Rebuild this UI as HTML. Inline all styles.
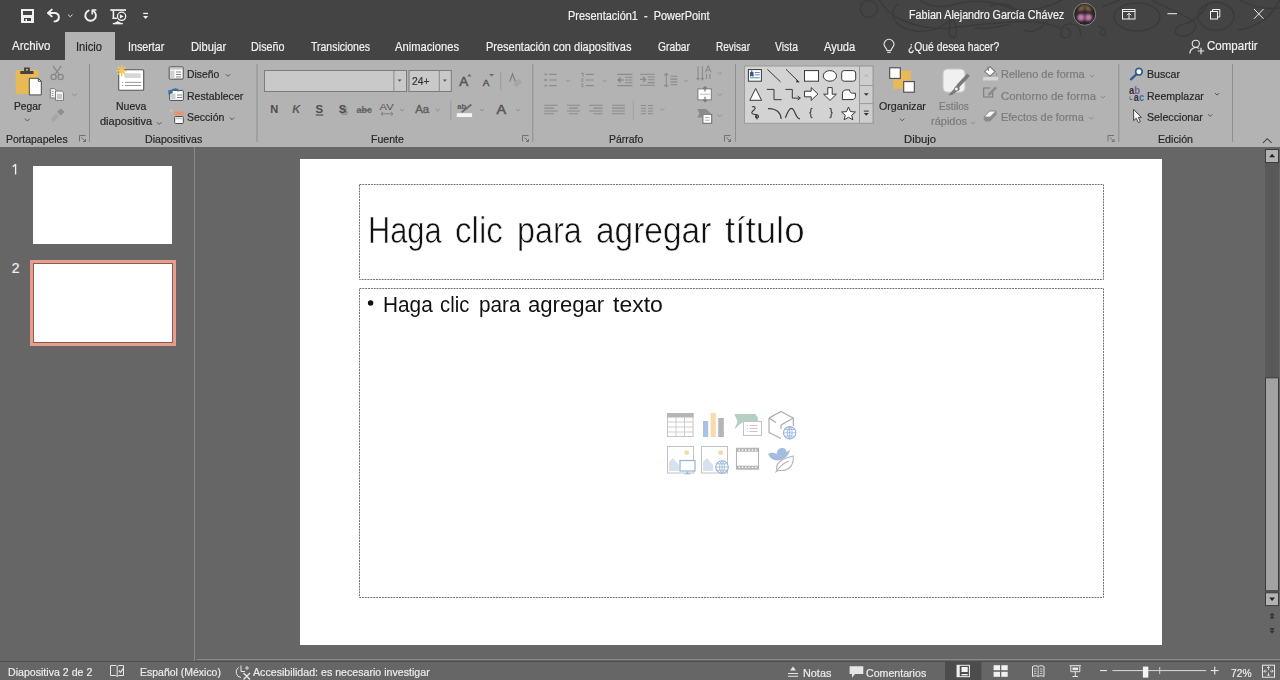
<!DOCTYPE html>
<html><head><meta charset="utf-8"><style>
*{margin:0;padding:0;box-sizing:border-box}
html,body{width:1280px;height:680px;overflow:hidden;background:#666;font-family:"Liberation Sans",sans-serif}
.a{position:absolute}
.t{position:absolute;white-space:nowrap;transform-origin:0 0;-webkit-text-stroke:0.2px currentColor}
svg{position:absolute;overflow:visible}
</style></head><body>
<div class="a" style="left:0;top:0;width:1280px;height:60px;background:#444"></div>
<div class="a" style="left:65px;top:32px;width:50px;height:28px;background:#b3b3b3"></div>
<div class="a" style="left:0;top:60px;width:1280px;height:87px;background:#b3b3b3"></div>
<!-- thumbnails -->
<div class="a" style="left:33px;top:166px;width:139px;height:78px;background:#fff"></div>
<div class="a" style="left:30px;top:260px;width:146px;height:86px;background:#e79e8e"></div>
<div class="a" style="left:33px;top:263px;width:140px;height:80px;background:#8a5a50"></div>
<div class="a" style="left:34px;top:264px;width:138px;height:78px;background:#fff"></div>
<div class="a" style="left:194px;top:147px;width:1px;height:514px;background:#8a8a8a"></div>
<!-- slide -->
<div class="a" style="left:300px;top:159px;width:862px;height:486px;background:#fff"></div>
<!-- status -->
<div class="a" style="left:197px;top:659px;width:1083px;height:1px;background:#888"></div>
<div class="a" style="left:0;top:661px;width:1280px;height:1px;background:#4d4d4d"></div>
<svg width="1280" height="680" style="left:0;top:0">
<!-- title bar decoration -->
<g stroke="#3a3a3a" stroke-width="1.4" fill="none" opacity="0.9">
<circle cx="868.8" cy="8.8" r="8.5"/>
<path d="M879 0 C884 8 892 16 902 20 C915 26 935 30 950 28 C970 25 990 24 1010 22 C1030 20 1045 22 1060 28"/>
<path d="M898 4 C888 10 892 28 915 31 C935 33 945 25 953 18"/>
<path d="M953 18 C948 26 948 37 953 38 C958 37 957 26 953 18"/>
<path d="M920 0 C930 8 945 8 960 3 C975 -1 995 2 1010 8 C1030 14 1050 6 1062 0"/>
<path d="M975 28 C990 30 1000 26 1010 24"/>
<ellipse cx="1137" cy="17" rx="23" ry="14"/>
<path d="M1152 0 C1165 8 1185 14 1194 22 C1200 28 1190 38 1180 36 C1172 34 1175 26 1184 24 C1195 22 1205 10 1208 3"/>
<ellipse cx="1216" cy="16.3" rx="18" ry="14"/>
<path d="M1238 30 C1255 28 1268 18 1272 12 C1276 6 1278 2 1280 0"/>
<path d="M1102 7 C1108 4 1114 2 1120 0"/>
<path d="M1098 26 C1104 28 1108 32 1104 35 C1100 36 1099 32 1102 30"/>
<path d="M1240 0 C1250 6 1262 10 1280 8"/>
<path d="M1065.5 28 A5 5 0 1 1 1060.5 33 A9 9 0 0 1 1069.5 24 C1078 24 1082 30 1080 36"/>
<path d="M1024 30 C1030 34 1040 30 1046 22 C1050 16 1056 12 1062 14"/>
<path d="M990 6 C1000 2 1010 4 1016 10"/>
</g>
<!-- ===== QAT ===== -->
<g fill="#f0f0f0">
<rect x="21" y="9" width="13" height="14"/>
</g>
<rect x="23" y="11" width="9" height="4" fill="#444"/>
<rect x="24" y="18" width="7" height="3" fill="#444"/>
<rect x="25.5" y="19" width="1.5" height="2" fill="#f0f0f0"/>
<g fill="none" stroke="#f0f0f0" stroke-width="1.9" stroke-linecap="round" stroke-linejoin="round">
<path d="M48.5 13 H55.5 A4.3 4.3 0 0 1 55.5 21.4 H54.5"/>
<path d="M51.8 9.6 L48 13 L51.8 16.4"/>
<path d="M88.6 10.6 A5.3 5.3 0 1 0 93.4 11"/>
<path d="M92.2 14.6 V10 H96.4" stroke-width="1.5" stroke-linecap="butt"/>
</g>
<path d="M68 14.6 L70.25 16.8 L72.5 14.6" fill="none" stroke="#e0e0e0" stroke-width="1"/>
<g fill="#f0f0f0">
<rect x="110.3" y="9.2" width="15.7" height="1.7"/>
<rect x="112.6" y="10.5" width="1.6" height="8.5"/>
<rect x="112.6" y="17.6" width="4.6" height="1.4"/>
<path d="M112.8 23.9 L117.7 21 L122.8 23.9 V24.2 H112.8Z"/>
<rect x="112.8" y="22.9" width="10" height="1.2"/>
<path d="M119.9 14.2 V18.6 L123.6 16.4Z"/>
<rect x="143.2" y="12.8" width="4.8" height="1.3"/>
<path d="M143 16.1 H148.2 L145.6 19.1Z"/>
</g>
<circle cx="121.6" cy="16.3" r="4.1" fill="none" stroke="#f0f0f0" stroke-width="1.3"/>
<!-- ===== window controls ===== -->
<g fill="none" stroke="#f0f0f0" stroke-width="1">
<rect x="1122.5" y="9.5" width="12.5" height="9.5"/>
<path d="M1122.5 11.5 H1135"/>
<path d="M1129 19 V13.2 M1127 15.2 L1129 13.2 L1131 15.2"/>
<rect x="1210.5" y="11.5" width="7" height="7.5"/>
<path d="M1212.5 11.5 V9.5 H1219.8 V17 H1217.5"/>
<path d="M1254 9 L1263.5 18.8 M1263.5 9 L1254 18.8"/>
</g>
<rect x="1167.4" y="13.2" width="9.6" height="1" fill="#f0f0f0"/>
<!-- avatar -->
<defs><filter id="blr" x="-50%" y="-50%" width="200%" height="200%"><feGaussianBlur stdDeviation="0.9"/></filter><clipPath id="avc"><circle cx="1084.7" cy="14.3" r="10.5"/></clipPath></defs>
<circle cx="1084.7" cy="14.3" r="11" fill="#2a2222" stroke="#8a8a8a" stroke-width="1"/>
<g clip-path="url(#avc)"><g filter="url(#blr)">
<path d="M1078 12 C1078 7 1081 5 1084.7 5 C1088.4 5 1091.4 7 1091.4 12 C1089 10 1080 10 1078 12Z" fill="#7a6448"/>
<ellipse cx="1081" cy="17.4" rx="3.6" ry="3.4" fill="#c47aae"/>
<ellipse cx="1088.4" cy="17.4" rx="3.6" ry="3.4" fill="#c47aae"/>
<path d="M1084.7 6 V24" stroke="#1e1612" stroke-width="1.6" fill="none"/>
</g></g>
<!-- tab row icons -->
<g fill="none" stroke="#e8e8e8" stroke-width="1.1">
<path d="M887 50.5 C887 48 884 47 884 44.3 A5 5 0 0 1 894 44.3 C894 47 891 48 891 50.5 Z"/>
<path d="M887.2 52.3 H890.8"/>
<circle cx="1195.8" cy="43.8" r="3.6"/>
<path d="M1189.8 53.5 A6.2 6.2 0 0 1 1199.2 48.4" />
<path d="M1201 47.8 V54.3 M1197.8 51 H1204.2" stroke-width="1.2"/>
</g>
<!-- ===== Portapapeles ===== -->
<rect x="15.8" y="70" width="22.4" height="24" fill="#e9b955"/>
<path d="M20.3 74 V71 H24 V67.6 H29.8 V71 H33.5 V74Z" fill="#444"/>
<circle cx="26.9" cy="69.8" r="0.9" fill="#d8d8d8"/>
<path d="M29.3 78.3 H38.3 L41.3 81.3 V94.9 H29.3Z" fill="#fff" stroke="#4a4a4a" stroke-width="1"/>
<path d="M38.3 78.3 V81.3 H41.3" fill="none" stroke="#4a4a4a" stroke-width="1"/>
<path d="M25 118.6 L27.4 121 L29.8 118.6" fill="none" stroke="#555" stroke-width="1"/>
<!-- scissors -->
<g fill="none" stroke="#858585" stroke-width="1.2">
<path d="M53 65.8 L59.6 75 M61.2 65.8 L54.6 75"/>
<circle cx="53.6" cy="77" r="2.6"/>
<circle cx="60.6" cy="77" r="2.6"/>
</g>
<!-- copy -->
<path d="M50.3 88.6 H54.5 L56 90 V98 H50.3Z" fill="#f4f4f4" stroke="#7a7a7a" stroke-width="1"/>
<path d="M55.5 91 H61.8 L63.5 92.7 V100.4 H55.5Z" fill="#f4f4f4" stroke="#7a7a7a" stroke-width="1"/>
<path d="M51.8 91.5 H53.5 M51.8 93.5 H53.5 M51.8 95.5 H53.5" stroke="#888" stroke-width="0.8"/>
<rect x="57" y="94" width="5" height="5" fill="#c8c8c8"/>
<path d="M72.2 93.8 L74.5 96 L76.8 93.8" fill="none" stroke="#8a8a8a" stroke-width="1"/>
<!-- format painter -->
<path d="M50.5 119 L56 113.5 L59 116.5 L53.5 122Z" fill="#a6a6a6"/>
<path d="M57 111.5 L61 108.5 L64.6 112 L60.5 115.5Z" fill="#8e8e8e"/>
<!-- separators -->
<rect x="89" y="64" width="1" height="78" fill="#8e8e8e"/>
<rect x="256.5" y="64" width="1" height="78" fill="#8e8e8e"/>
<rect x="532.3" y="64" width="1" height="78" fill="#8e8e8e"/>
<rect x="735" y="64" width="1" height="78" fill="#8e8e8e"/>
<rect x="1118.3" y="64" width="1" height="78" fill="#8e8e8e"/>
<rect x="1232" y="64" width="1" height="78" fill="#8e8e8e"/>
<!-- dialog launchers -->
<g fill="none" stroke="#6a6a6a" stroke-width="0.9">
<path d="M79.5 141.5 V135.5 H85.5 M81.5 137.5 L85.5 141.5 M85.5 139 V141.5 H83"/>
<path d="M522.5 141.5 V135.5 H528.5 M524.5 137.5 L528.5 141.5 M528.5 139 V141.5 H526"/>
<path d="M724.5 141.5 V135.5 H730.5 M726.5 137.5 L730.5 141.5 M730.5 139 V141.5 H728"/>
<path d="M1108 141.5 V135.5 H1114 M1110 137.5 L1114 141.5 M1114 139 V141.5 H1111.5"/>
</g>
<!-- ===== Diapositivas ===== -->
<rect x="118.7" y="69.8" width="25" height="20.5" rx="1" fill="#fff" stroke="#555" stroke-width="1.1"/>
<rect x="124.6" y="73.3" width="16" height="4.7" fill="#d6d6d6"/>
<path d="M122 82.4 H123.2 M125 82.4 H141 M122 85.5 H123.2 M125 85.5 H141" stroke="#8a8a8a" stroke-width="0.9"/>
<g stroke="#f0c860" stroke-width="1.6" stroke-linecap="round">
<path d="M121.6 66 V75.4 M116.9 70.7 H126.3 M118.3 67.4 L124.9 74 M124.9 67.4 L118.3 74"/>
</g>
<circle cx="121.6" cy="70.7" r="1.8" fill="#f0c860"/>
<path d="M157 122.3 L159.2 124.5 L161.4 122.3" fill="none" stroke="#555" stroke-width="1"/>
<!-- Diseño icon -->
<rect x="169.2" y="66.9" width="14" height="12.2" rx="0.8" fill="#fff" stroke="#4a4a4a" stroke-width="1"/>
<rect x="170.2" y="67.9" width="12" height="1.7" fill="#c8c8c8"/>
<rect x="170.2" y="70.5" width="4.2" height="8" fill="#cfcfcf"/>
<path d="M176 72 H181 M176 74.5 H181 M176 77 H181" stroke="#777" stroke-width="0.9"/>
<path d="M225.8 74.2 L228 76.4 L230.2 74.2" fill="none" stroke="#555" stroke-width="1"/>
<!-- Restablecer -->
<rect x="169.7" y="90.4" width="13.6" height="10" rx="0.8" fill="#fff" stroke="#4a4a4a" stroke-width="1"/>
<rect x="171" y="93.5" width="4.5" height="5.5" fill="#cfcfcf"/>
<path d="M177 95 H182 M177 97.5 H182" stroke="#777" stroke-width="0.9"/>
<path d="M171 92.6 C172 89 176.5 88 178.6 91.2" fill="none" stroke="#3b6fa6" stroke-width="1.8"/>
<path d="M168.2 89.8 L173.4 92.4 L168.6 95Z" fill="#3b6fa6"/>
<!-- Sección -->
<circle cx="171.2" cy="110.6" r="1.3" fill="#f3c08a" opacity="0.8"/>
<rect x="174.2" y="111.6" width="9.4" height="3.4" rx="0.6" fill="#e8946a"/>
<rect x="174.7" y="116.5" width="8.6" height="7" rx="0.8" fill="#fff" stroke="#4a4a4a" stroke-width="1"/>
<rect x="175.7" y="117.5" width="6.6" height="1.8" fill="#c8c8c8"/>
<path d="M229.8 117.5 L232 119.7 L234.2 117.5" fill="none" stroke="#555" stroke-width="1"/>
<!-- ===== Fuente ===== -->
<rect x="264.5" y="70.5" width="142" height="21" fill="#c9c9c9" stroke="#7c7c7c" stroke-width="1"/>
<path d="M393.9 71 V91" stroke="#8a8a8a" stroke-width="1"/>
<path d="M397.6 79.6 H401.6 L399.6 81.8Z" fill="#555"/>
<rect x="409" y="70.5" width="42.3" height="21" fill="#c9c9c9" stroke="#7c7c7c" stroke-width="1"/>
<path d="M439.3 71 V91" stroke="#8a8a8a" stroke-width="1"/>
<path d="M442.8 79.6 H446.8 L444.8 81.8Z" fill="#555"/>
<!-- grow/shrink font -->
<text x="459.2" y="86" font-family="Liberation Sans" font-size="12.4" fill="#555" stroke="#555" stroke-width="0.5" textLength="9" lengthAdjust="spacingAndGlyphs">A</text>
<path d="M467.4 76.6 L469.4 73.8 L471.4 76.6Z" fill="#666"/>
<text x="482.8" y="86" font-family="Liberation Sans" font-size="8.6" fill="#555" stroke="#555" stroke-width="0.4" textLength="6.6" lengthAdjust="spacingAndGlyphs">A</text>
<path d="M489.3 74 H494 L491.6 76.6Z" fill="#666"/>
<rect x="500.2" y="72.2" width="1" height="18" fill="#9a9a9a"/>
<path d="M509.8 81.5 L512.5 73.8 L515.3 81.5" fill="none" stroke="#7a7a7a" stroke-width="1.1"/>
<path d="M513 84 L518.5 78.5 L522 82 L516.5 87.5Z" fill="#a6a6a6"/>
<!-- row 2 -->
<text x="270.2" y="113" font-family="Liberation Sans" font-size="11" font-weight="bold" fill="#4e4e4e" textLength="8" lengthAdjust="spacingAndGlyphs">N</text>
<text x="292.3" y="113" font-family="Liberation Sans" font-size="11" font-weight="bold" font-style="italic" fill="#5a5a5a" textLength="8" lengthAdjust="spacingAndGlyphs">K</text>
<text x="315.6" y="113" font-family="Liberation Sans" font-size="11" font-weight="bold" fill="#4e4e4e" textLength="7.6" lengthAdjust="spacingAndGlyphs">S</text>
<rect x="315.8" y="114.4" width="7.4" height="1.2" fill="#4e4e4e"/>
<text x="340.4" y="114.6" font-family="Liberation Sans" font-size="11" font-weight="bold" fill="#8c8c8c" textLength="7.6" lengthAdjust="spacingAndGlyphs">S</text>
<text x="338.8" y="113" font-family="Liberation Sans" font-size="11" font-weight="bold" fill="#4e4e4e" textLength="7.6" lengthAdjust="spacingAndGlyphs">S</text>
<text x="356.6" y="113" font-family="Liberation Sans" font-size="9.5" font-weight="bold" fill="#606060" textLength="15.4" lengthAdjust="spacingAndGlyphs">abc</text>
<rect x="356.6" y="109.6" width="15.4" height="1" fill="#606060"/>
<text x="379.6" y="110.2" font-family="Liberation Sans" font-size="9.2" fill="#555" textLength="14" lengthAdjust="spacingAndGlyphs">AV</text>
<path d="M381 113.8 H393 M383 111.9 L381 113.8 L383 115.7 M391 111.9 L393 113.8 L391 115.7" fill="none" stroke="#7a7a7a" stroke-width="0.9"/>
<path d="M400 109 L402.1 111 L404.2 109" fill="none" stroke="#888" stroke-width="0.9"/>
<text x="415.2" y="113.2" font-family="Liberation Sans" font-size="11.6" fill="#606060" stroke="#606060" stroke-width="0.4" textLength="14" lengthAdjust="spacingAndGlyphs">Aa</text>
<path d="M435.6 109 L437.7 111 L439.8 109" fill="none" stroke="#888" stroke-width="0.9"/>
<rect x="450.3" y="100.7" width="1" height="19" fill="#9a9a9a"/>
<text x="457.2" y="109.2" font-family="Liberation Sans" font-size="8" font-weight="bold" fill="#555" textLength="9" lengthAdjust="spacingAndGlyphs">ab</text>
<path d="M461.7 112.2 L471.4 104.5" stroke="#6a6a6a" stroke-width="1.8"/>
<rect x="456.8" y="113.2" width="15.3" height="3.8" fill="#f4f4f4"/>
<path d="M479.9 109 L482 111 L484.1 109" fill="none" stroke="#888" stroke-width="0.9"/>
<text x="496.4" y="114" font-family="Liberation Sans" font-size="13.4" fill="#5a5a5a" stroke="#5a5a5a" stroke-width="0.6" textLength="9.6" lengthAdjust="spacingAndGlyphs">A</text>
<path d="M516 109 L518.1 111 L520.2 109" fill="none" stroke="#888" stroke-width="0.9"/>
<!-- ===== Párrafo ===== -->
<g stroke="#8a8a8a" stroke-width="1.1" fill="none">
<path d="M544.6 74.4 H546.8 M544.6 80 H546.8 M544.6 85.6 H546.8" stroke-width="1.8"/>
<path d="M549 74.4 H556.7 M549 80 H556.7 M549 85.6 H556.7"/>
<path d="M566 79.8 L568 81.8 L570 79.8" stroke-width="0.9"/>
<path d="M581.2 73.4 H583 V76.4 M585.7 74.4 H593.8 M585.7 80 H593.8 M585.7 85.6 H593.8" />
<path d="M581.2 79 H583.4 L581.2 81.2 H583.6 M581.2 84 H583.4 L582 85.4 L583.4 86.6 L581.2 87.2" stroke-width="0.8"/>
<path d="M602.4 79.8 L604.4 81.8 L606.4 79.8" stroke-width="0.9"/>
<path d="M617.4 74.4 H632.4 M617.4 85.6 H632.4 M625 77.3 H632.4 M625 80 H632.4 M625 82.8 H632.4"/>
<path d="M618 80 H623.6 M620.6 77.4 L618 80 L620.6 82.6" stroke-width="1.4"/>
<path d="M640 74.2 H654.8 M640 85.3 H654.8 M647.8 77 H654.8 M647.8 79.8 H654.8 M647.8 82.6 H654.8"/>
<path d="M640 79.4 H645.6 M643 76.8 L645.6 79.4 L643 82" stroke-width="1.4"/>
<path d="M666.3 73.4 V86.8 M664.3 75.4 L666.3 73.4 L668.3 75.4 M664.3 84.8 L666.3 86.8 L668.3 84.8"/>
<path d="M670.4 76.3 H677.4 M670.4 79.1 H677.4 M670.4 81.9 H677.4 M670.4 84.7 H677.4"/>
<path d="M683.9 79.8 L685.9 81.8 L687.9 79.8" stroke-width="0.9"/>
<path d="M698 66.2 V79.4 M702.4 66.2 V79.4 M696.6 78 L698 79.8 L699.4 78 M701 78 L702.4 79.8 L703.8 78 M706.5 74 V79 M709.9 74 V79" stroke-width="1.1"/>
<path d="M705.3 72.4 L708.2 65.8 L711.1 72.4 M706.4 70.2 H710" stroke-width="1.1"/>
<path d="M717.8 72.3 L719.8 74.3 L721.8 72.3" stroke-width="0.9"/>
<path d="M544.2 105.3 H557.6 M544.2 108.1 H553.9 M544.2 111 H557.6 M544.2 113.7 H553.9"/>
<path d="M567 105.3 H580 M569 108.1 H578 M567 111 H580 M569 113.7 H578"/>
<path d="M589.2 105.3 H602.6 M593.2 108.1 H602.6 M589.2 111 H602.6 M593.2 113.7 H602.6"/>
<path d="M612 105.3 H625 M612 108.1 H625 M612 111 H625 M612 113.7 H625"/>
<path d="M640.9 105.5 H645.9 M648 105.5 H653.1 M640.9 108.3 H645.9 M648 108.3 H653.1 M640.9 111 H645.9 M648 111 H653.1 M640.9 113.8 H645.9 M648 113.8 H653.1"/>
<path d="M660.4 108.5 L662.4 110.5 L664.4 108.5" stroke-width="0.9"/>
<path d="M717.8 93.5 L719.8 95.5 L721.8 93.5 M717.8 114.6 L719.8 116.6 L721.8 114.6" stroke-width="0.9"/>
</g>
<rect x="632.7" y="100.2" width="1" height="19.4" fill="#a0a0a0"/>
<rect x="697.9" y="88.9" width="13.4" height="11" fill="#fff" stroke="#7a7a7a" stroke-width="1"/>
<path d="M705 86.8 V91.5 M703 88.8 L705 86.8 L707 88.8 M705 96.8 V101.6 M703 99.6 L705 101.6 L707 99.6" stroke="#7a7a7a" stroke-width="1.3" fill="none"/>
<path d="M700 94.2 H710" stroke="#aaa" stroke-width="0.8"/>
<path d="M697.2 109 H706 L710.8 113.6 H702.4 V117.5 H697.2 L699.5 113.3Z" fill="#8a8a8a"/>
<rect x="702.9" y="114.3" width="8.8" height="9" fill="#fff" stroke="#6a6a6a" stroke-width="1"/>
<path d="M705 117.5 H709.5 M705 120.2 H709.5" stroke="#999" stroke-width="0.8"/>
<!-- ===== Dibujo gallery ===== -->
<rect x="744.5" y="66" width="128.5" height="57.3" fill="#d3d3d3" stroke="#9a9a9a" stroke-width="1"/>
<rect x="859.5" y="66" width="13.5" height="57.3" fill="#cdcdcd" stroke="#9a9a9a" stroke-width="1"/>
<path d="M859.5 85.5 H873 M859.5 103.6 H873" stroke="#9a9a9a" stroke-width="1"/>
<path d="M863.8 76.6 L866.3 74 L868.8 76.6Z" fill="#b4b4b4"/>
<path d="M863.8 93.2 H868.8 L866.3 95.8Z" fill="#333"/>
<rect x="863.8" y="110.6" width="5" height="1" fill="#333"/>
<path d="M863.8 113 H868.8 L866.3 115.8Z" fill="#333"/>
<g fill="#fff" stroke="#383838" stroke-width="1">
<rect x="748.4" y="69.6" width="13" height="11.6"/>
<rect x="804.5" y="70.6" width="14" height="10.6"/>
<ellipse cx="829.9" cy="75.9" rx="6.6" ry="5.3"/>
<rect x="841.7" y="70.6" width="14" height="10.6" rx="2.5"/>
<path d="M755.7 88.5 L761.6 100.3 H749.8Z"/>
<path d="M804.5 91.2 H811.2 V87.6 L817.9 94 L811.2 100.4 V96.8 H804.5Z"/>
<path d="M827.8 87.6 H832.2 V94.2 H836.4 L830 100.4 L823.6 94.2 H827.8Z"/>
<path d="M842.4 99.6 V93.6 C842.4 91.2 843.8 89.9 846.5 89.9 H849.6 C849.6 92 850.6 93.2 852.6 93.2 H855.4 V96.4 C855.4 98.6 854.2 99.6 852 99.6Z"/>
<path d="M848.5 107 L850.5 111.6 L855.4 112 L851.7 115.3 L852.9 119.8 L848.5 117.3 L844.1 119.8 L845.3 115.3 L841.6 112 L846.5 111.6Z" stroke-linejoin="miter"/>
</g>
<path d="M842.4 89.9 H848 L851 92.6" fill="none" stroke="#383838" stroke-width="1" opacity="0"/>
<rect x="750" y="72" width="3.5" height="4" fill="#3a6aa0"/>
<path d="M750.5 76.5 L751.8 71.8 L753.1 76.5" fill="none" stroke="#2b5a90" stroke-width="1.2"/>
<path d="M754.8 72.5 H759.8 M754.8 74.8 H759.8 M750 77.8 H759.8" stroke="#3a6aa0" stroke-width="0.8"/>
<g fill="none" stroke="#383838" stroke-width="1">
<path d="M767.4 69.3 L780.7 82"/>
<path d="M786 69.3 L799 82"/>
<path d="M766.8 89.4 H774 V99.7 H781.6"/>
<path d="M785.4 89.4 H792.3 V98.1 H799.6"/>
<path d="M768 108.6 C773.5 108.4 780.5 110.5 781.2 119" stroke-width="1.2"/>
<path d="M785.4 117.8 C787.5 112 789.8 108.4 791.6 108.4 C794.8 108.4 795.5 118.8 800 118.8" stroke-width="1.2"/>
<path d="M812.5 108.2 C810.8 108.2 810.8 109 810.8 111.5 C810.8 112.5 810.2 112.9 809.3 113 C810.2 113.1 810.8 113.5 810.8 114.5 C810.8 117 810.8 117.8 812.5 117.8" stroke-width="1.1"/>
<path d="M829.5 108.2 C831.2 108.2 831.2 109 831.2 111.5 C831.2 112.5 831.8 112.9 832.7 113 C831.8 113.1 831.2 113.5 831.2 114.5 C831.2 117 831.2 117.8 829.5 117.8" stroke-width="1.1"/>
<path d="M752 107 C754.5 105.5 756.5 108 754 110 C751.5 112 751 113 753 114 C755.5 115 758.5 114 758.5 116.5 C758.5 118.5 755.5 118.5 755.5 116.5 C755.5 115 757 115 757 119.5" stroke-width="1.1"/>
</g>
<path d="M796.6 79.6 L799.8 82.2 L796.2 82.6Z" fill="#383838"/>
<path d="M797.6 96.1 L800.4 98.1 L797.6 100.1" fill="none" stroke="#383838" stroke-width="1"/>
<!-- Organizar -->
<rect x="900.6" y="70.6" width="10.4" height="9.8" fill="#e9b955"/>
<rect x="893.3" y="79.6" width="10" height="9.3" fill="#e9b955"/>
<rect x="889.7" y="67.8" width="10.6" height="10.6" fill="#fff" stroke="#4a4a4a" stroke-width="1.1"/>
<rect x="903.7" y="81.6" width="10.6" height="10.6" fill="#fff" stroke="#4a4a4a" stroke-width="1.1"/>
<path d="M900 118.6 L902.2 120.8 L904.4 118.6" fill="none" stroke="#555" stroke-width="1"/>
<!-- Estilos rapidos -->
<rect x="943" y="69" width="22" height="23.2" rx="4.5" fill="#f0f0f0" stroke="#c4c4c4" stroke-width="1"/>
<path d="M968.6 74.8 L957.5 86.5" stroke="#7a7a7a" stroke-width="3.6"/>
<path d="M956.5 86 L948.4 95.2 L952 95 L959.5 89.5Z" fill="#7a7a7a"/>
<circle cx="957" cy="88.5" r="2.6" fill="#7a7a7a"/>
<circle cx="956.4" cy="89.1" r="1.5" fill="#f0f0f0"/>
<path d="M971 121.8 L973.1 123.9 L975.2 121.8" fill="none" stroke="#8a8a8a" stroke-width="1"/>
<!-- Relleno / Contorno / Efectos -->
<rect x="983.2" y="77" width="14.7" height="3.5" fill="#d6d6d6"/>
<path d="M984.6 71.6 L990 66.6 L995 71.6 L990 76.2Z" fill="#fafafa" stroke="#7a7a7a" stroke-width="1.1"/>
<path d="M988 66.6 L988.6 71" stroke="#7a7a7a" stroke-width="1"/>
<path d="M996 72.5 C997 74 997.6 75 996.8 75.8 C996 75 996 74 996 72.5Z" fill="#7a7a7a"/>
<path d="M990.5 88 H983.7 V97 H992.7 V92" fill="none" stroke="#7a7a7a" stroke-width="1.1"/>
<path d="M987.5 94.2 L995.2 86.5 L997 88.3 L989.3 96Z" fill="#8a8a8a"/>
<path d="M983.8 117 L989.6 111 H996.2 L990.2 117.2Z" fill="#f6f6f6" stroke="#858585" stroke-width="1"/>
<path d="M983.8 117 V119.8 L985.5 121.6 H990 L996.6 114.6 V111.2 L990.2 117.2 H983.8Z" fill="#8a8a8a"/>
<path d="M1090 75 L1092.1 77.1 L1094.2 75" fill="none" stroke="#8a8a8a" stroke-width="1"/>
<path d="M1100.8 96 L1102.9 98.1 L1105 96" fill="none" stroke="#8a8a8a" stroke-width="1"/>
<path d="M1089.3 117 L1091.4 119.1 L1093.5 117" fill="none" stroke="#8a8a8a" stroke-width="1"/>
<!-- ===== Edicion ===== -->
<circle cx="1138.9" cy="71.7" r="3.3" fill="#fff" stroke="#2e5c8c" stroke-width="1.7"/>
<path d="M1136.4 74.3 L1131 79.4" stroke="#2e5c8c" stroke-width="2.2" stroke-linecap="round"/>
<text x="1129" y="94.2" font-family="Liberation Sans" font-size="10.5" font-weight="bold" fill="#333" textLength="5.2" lengthAdjust="spacingAndGlyphs">a</text>
<text x="1134.3" y="94.2" font-family="Liberation Sans" font-size="10.5" font-weight="bold" fill="#7c5c9c" textLength="5.8" lengthAdjust="spacingAndGlyphs">b</text>
<text x="1133.8" y="101" font-family="Liberation Sans" font-size="10" font-weight="bold" fill="#333" textLength="5" lengthAdjust="spacingAndGlyphs">a</text>
<text x="1139" y="101" font-family="Liberation Sans" font-size="10" font-weight="bold" fill="#3a6aa0" textLength="5" lengthAdjust="spacingAndGlyphs">c</text>
<path d="M1130 96.5 V99.5 H1132.5" fill="none" stroke="#3a6aa0" stroke-width="0.9"/>
<path d="M1215 93 L1217.1 95.1 L1219.2 93" fill="none" stroke="#555" stroke-width="1"/>
<path d="M1133.6 109.4 V120.6 L1136.2 118.2 L1138.4 122.6 L1140.4 121.6 L1138.3 117.4 H1141.4Z" fill="#fafafa" stroke="#444" stroke-width="1"/>
<path d="M1208.2 114.3 L1210.3 116.4 L1212.4 114.3" fill="none" stroke="#555" stroke-width="1"/>
<!-- collapse ribbon -->
<path d="M1263 142.8 L1267.3 138.7 L1271.6 142.8" fill="none" stroke="#444" stroke-width="1.1"/>
<g fill="none" stroke="#6e6e6e" stroke-width="1" stroke-dasharray="1.9 0.95">
<rect x="359.5" y="184.5" width="744" height="95"/>
<rect x="359.5" y="288.5" width="744" height="309"/>
</g>
<circle cx="370.6" cy="303" r="2.7" fill="#111"/>
<!-- ===== content icons ===== -->
<g>
<rect x="667.5" y="413.5" width="25.5" height="23" fill="#fff" stroke="#c4c4c4" stroke-width="1"/>
<rect x="667" y="413" width="26.5" height="4.5" fill="#b6b6b6"/>
<path d="M667.5 422 H693 M667.5 427 H693 M667.5 432 H693 M676 417 V436.5 M684.5 417 V436.5" stroke="#cdcdcd" stroke-width="1"/>
<rect x="703" y="421" width="5.2" height="16" fill="#a9c1e2"/>
<rect x="710.6" y="413" width="5.2" height="24" fill="#f5dcaa"/>
<rect x="718.2" y="418" width="5.6" height="19" fill="#b5b5b5"/>
<path d="M734.4 414 H755.4 L757.8 417.6 V422 H743.5 L740 424 L734.4 429.6 L737.5 421.6Z" fill="#b5cfc3"/>
<rect x="743.5" y="421.5" width="18" height="14" fill="#fff" stroke="#c4c4c4" stroke-width="1"/>
<path d="M747.2 425.5 H748.2 M749.8 425.5 H757.5 M747.2 428.5 H748.2 M749.8 428.5 H757.5 M747.2 431.5 H748.2 M749.8 431.5 H757.5" stroke="#d0a0a0" stroke-width="0.7"/>
<path d="M749.8 425.5 H757.5 M749.8 428.5 H757.5 M749.8 431.5 H757.5" stroke="#c8c8c8" stroke-width="0.7"/>
<path d="M781 411.5 L793.3 418 V426 M769 418 L781 411.5 M769 418 V432.5 L781 438.5 M769 418 L776 422.5 M781 425 V429 M793.3 418 L781 425" fill="none" stroke="#a8a8a8" stroke-width="1.1"/>
<circle cx="789.7" cy="432.8" r="6.2" fill="#fff" stroke="#8fb1dc" stroke-width="1.1"/>
<path d="M783.5 432.8 H795.9 M789.7 426.6 V439 M785 429.5 H794.4 M785 436.1 H794.4 M789.7 426.6 C786.5 429 786.5 436.6 789.7 439 M789.7 426.6 C792.9 429 792.9 436.6 789.7 439" fill="none" stroke="#8fb1dc" stroke-width="0.8"/>
<!-- row 2 -->
<rect x="667.5" y="446.5" width="26" height="26.5" fill="#fff" stroke="#c2c2c2" stroke-width="1"/>
<circle cx="686.6" cy="452.6" r="2.4" fill="#f3d9a8"/>
<path d="M669 471 V462 L673 458 L679 465 V471Z" fill="#d8e2ec"/>
<rect x="680" y="460.5" width="15" height="10.5" fill="#fff" stroke="#97b3d6" stroke-width="1.2"/>
<path d="M684.5 473.8 H690.5 M687.5 471.5 V473.8" stroke="#97b3d6" stroke-width="1"/>
<rect x="701.5" y="446.5" width="26" height="26.5" fill="#fff" stroke="#c2c2c2" stroke-width="1"/>
<circle cx="720.6" cy="452.6" r="2.4" fill="#f3d9a8"/>
<path d="M703 471 V462 L707 458 L713 465 V471Z" fill="#d8e2ec"/>
<circle cx="722" cy="467" r="6.3" fill="#fff" stroke="#97b3d6" stroke-width="1.1"/>
<path d="M715.7 467 H728.3 M722 460.7 V473.3 M716.8 463.8 H727.2 M716.8 470.2 H727.2 M722 460.7 C718.8 463 718.8 471 722 473.3 M722 460.7 C725.2 463 725.2 471 722 473.3" fill="none" stroke="#97b3d6" stroke-width="0.8"/>
<rect x="736.5" y="448.3" width="22" height="20.8" fill="#fff" stroke="#b4b4b4" stroke-width="1.1"/>
<rect x="736.5" y="448.3" width="22" height="3.4" fill="#b4b4b4"/>
<rect x="736.5" y="465.7" width="22" height="3.4" fill="#b4b4b4"/>
<path d="M738.5 450 H740 M741.8 450 H743.3 M745.1 450 H746.6 M748.4 450 H749.9 M751.7 450 H753.2 M755 450 H756.5 M738.5 467.4 H740 M741.8 467.4 H743.3 M745.1 467.4 H746.6 M748.4 467.4 H749.9 M751.7 467.4 H753.2 M755 467.4 H756.5" stroke="#fff" stroke-width="1.4"/>
<path d="M768.2 454 C771 452 774 453 776.5 454 C777 449.5 780 447.5 783 448 C785.5 448.5 786.5 450 786.5 452 L790.5 449.5 C789 453 788 456 785 458 C781 461 775 461 772 459 C770 457.5 769 456 768.2 454Z" fill="#a3bde0"/>
<path d="M777 471 C775 464 780 459 793.2 456 C794 464 790 470 782 470.5 C780.5 470.6 778.5 470 777 471Z" fill="#fff" stroke="#b4b4b4" stroke-width="1.1"/>
<path d="M775.5 472.5 C779 467 784 463 788.5 461" fill="none" stroke="#b4b4b4" stroke-width="1.1"/>
</g>
<!-- ===== scrollbar ===== -->
<rect x="1265" y="149" width="14" height="457" fill="#595959"/>
<rect x="1265.5" y="149.5" width="13" height="13" fill="#b2b2b2" stroke="#3c3c3c" stroke-width="1"/>
<path d="M1269.2 157.2 H1275 L1272.1 153.8Z" fill="#222"/>
<rect x="1265.5" y="377.8" width="13" height="213" fill="#a2a2a2" stroke="#3c3c3c" stroke-width="1"/>
<rect x="1265.5" y="592.8" width="13" height="12.8" fill="#b2b2b2" stroke="#3c3c3c" stroke-width="1"/>
<path d="M1269.2 597.5 H1275 L1272.1 600.9Z" fill="#222"/>
<g fill="#333">
<path d="M1269.4 615.6 L1272.1 612.8 L1274.8 615.6Z M1269.4 618.4 L1272.1 615.6 L1274.8 618.4Z"/>
<path d="M1269.4 627.9 L1272.1 630.7 L1274.8 627.9Z M1269.4 630.7 L1272.1 633.5 L1274.8 630.7Z"/>
</g>
<!-- ===== status bar icons ===== -->
<g fill="none" stroke="#e6e6e6" stroke-width="1">
<path d="M110.5 665.5 H116 L117.2 666.7 L118.4 665.5 H123.5 V675.5 H118.4 L117.2 676.7 L116 675.5 H110.5Z"/>
<path d="M117.2 666.7 V676.7"/>
<path d="M118.8 670.5 L120.4 672.3 L123.6 668.2" stroke-width="1.2"/>
<path d="M241 665.5 V671.5 H245" />
<path d="M238.5 667.5 A5.5 5.5 0 0 0 241 677.5"/>
<path d="M243.5 673 L250 679.5 M250 673 L243.5 679.5" stroke-width="1.4"/>
<path d="M247 666 V670 M245 668 H249" stroke-width="0.9"/>
<path d="M788 673.5 H798 M788 676.2 H798" stroke-width="1.1"/>
</g>
<path d="M790 670.5 H796 L793 666.4Z" fill="#e6e6e6"/>
<path d="M849.6 666.2 H863.3 V674 H855 L852 677.8 V674 H849.6Z" fill="#e6e6e6"/>
<rect x="945" y="662" width="36.4" height="18" fill="#4c4c4c"/>
<rect x="957.1" y="665.3" width="12.3" height="11.4" fill="none" stroke="#f4f4f4" stroke-width="1"/>
<rect x="957.1" y="665.3" width="2.6" height="11.4" fill="#f4f4f4"/>
<rect x="961.5" y="667" width="6.2" height="5" fill="#f4f4f4"/>
<rect x="961.5" y="674" width="6.2" height="1.4" fill="#f4f4f4"/>
<g fill="#f0f0f0">
<rect x="993.6" y="665.2" width="6.4" height="5"/>
<rect x="1001.3" y="665.2" width="6.4" height="5"/>
<rect x="993.6" y="671.8" width="6.4" height="5"/>
<rect x="1001.3" y="671.8" width="6.4" height="5"/>
</g>
<g fill="none" stroke="#e8e8e8" stroke-width="1">
<path d="M1032.5 666.5 C1034.5 665.5 1036.5 665.5 1038.2 666.5 C1040 665.5 1042 665.5 1044 666.5 V676.5 C1042 675.5 1040 675.5 1038.2 676.5 C1036.5 675.5 1034.5 675.5 1032.5 676.5Z"/>
<path d="M1038.2 666.5 V676.5 M1034 669 H1036.5 M1034 671.2 H1036.5 M1034 673.4 H1036.5 M1040 669 H1042.5 M1040 671.2 H1042.5 M1040 673.4 H1042.5" stroke-width="0.8"/>
<path d="M1069.5 665.7 H1081 M1070.8 666.2 V671.7 H1079.8 V666.2 M1075.3 671.7 V676.5 M1072.5 676.5 H1078"/>
</g>
<rect x="1072.5" y="667.5" width="5.6" height="2.6" fill="#e8e8e8"/>
<rect x="1100" y="670" width="7" height="1.1" fill="#e8e8e8"/>
<rect x="1112.4" y="670" width="93.8" height="1.1" fill="#cfcfcf"/>
<rect x="1142.9" y="666.6" width="5.4" height="11" fill="#f4f4f4"/>
<rect x="1159.2" y="667" width="1" height="7" fill="#cfcfcf"/>
<rect x="1210.8" y="670" width="7.8" height="1.1" fill="#e8e8e8"/>
<rect x="1214.2" y="666.6" width="1.1" height="7.9" fill="#e8e8e8"/>
<rect x="1262.5" y="665.2" width="12" height="12" fill="none" stroke="#e8e8e8" stroke-width="1"/>
<path d="M1268.5 666.5 V670 M1267 668 L1268.5 666.5 L1270 668 M1268.5 676 V672.5 M1267 674.5 L1268.5 676 L1270 674.5 M1263.8 671.2 H1267 M1265.3 669.7 L1263.8 671.2 L1265.3 672.7 M1273.2 671.2 H1270 M1271.7 669.7 L1273.2 671.2 L1271.7 672.7" fill="none" stroke="#e8e8e8" stroke-width="0.8"/>
<path d="M15.6 164.2 V174.6 M12.8 166.8 L15.6 164.2" fill="none" stroke="#f2f2f2" stroke-width="1.3"/>

</svg>
<div class="t" style="left:568.40px;top:10.00px;font-size:12px;line-height:12px;color:#f2f2f2;transform:scaleX(0.9112);">Presentación1  -  PowerPoint</div>
<div class="t" style="left:908.60px;top:9.00px;font-size:12px;line-height:12px;color:#f2f2f2;transform:scaleX(0.8950);">Fabian Alejandro García Chávez</div>
<div class="t" style="left:11.90px;top:40.00px;font-size:12.5px;line-height:12.5px;color:#f2f2f2;transform:scaleX(0.9185);">Archivo</div>
<div class="t" style="left:76.25px;top:41.00px;font-size:12.5px;line-height:12.5px;color:#262626;transform:scaleX(0.8921);">Inicio</div>
<div class="t" style="left:128.40px;top:41.00px;font-size:12.5px;line-height:12.5px;color:#f2f2f2;transform:scaleX(0.8585);">Insertar</div>
<div class="t" style="left:190.50px;top:41.00px;font-size:12.5px;line-height:12.5px;color:#f2f2f2;transform:scaleX(0.8902);">Dibujar</div>
<div class="t" style="left:251.00px;top:41.00px;font-size:12.5px;line-height:12.5px;color:#f2f2f2;transform:scaleX(0.8612);">Diseño</div>
<div class="t" style="left:310.50px;top:41.00px;font-size:12.5px;line-height:12.5px;color:#f2f2f2;transform:scaleX(0.8381);">Transiciones</div>
<div class="t" style="left:395.00px;top:41.00px;font-size:12.5px;line-height:12.5px;color:#f2f2f2;transform:scaleX(0.8939);">Animaciones</div>
<div class="t" style="left:485.50px;top:41.00px;font-size:12.5px;line-height:12.5px;color:#f2f2f2;transform:scaleX(0.8797);">Presentación con diapositivas</div>
<div class="t" style="left:657.50px;top:41.00px;font-size:12.5px;line-height:12.5px;color:#f2f2f2;transform:scaleX(0.8226);">Grabar</div>
<div class="t" style="left:715.50px;top:41.00px;font-size:12.5px;line-height:12.5px;color:#f2f2f2;transform:scaleX(0.8019);">Revisar</div>
<div class="t" style="left:775.00px;top:41.00px;font-size:12.5px;line-height:12.5px;color:#f2f2f2;transform:scaleX(0.8333);">Vista</div>
<div class="t" style="left:823.75px;top:41.00px;font-size:12.5px;line-height:12.5px;color:#f2f2f2;transform:scaleX(0.8853);">Ayuda</div>
<div class="t" style="left:907.50px;top:41.00px;font-size:12.5px;line-height:12.5px;color:#f2f2f2;transform:scaleX(0.8258);">¿Qué desea hacer?</div>
<div class="t" style="left:1207.00px;top:40.00px;font-size:12.5px;line-height:12.5px;color:#f2f2f2;transform:scaleX(0.9217);">Compartir</div>
<div class="t" style="left:13.50px;top:101.00px;font-size:11.5px;line-height:11.5px;color:#262626;transform:scaleX(0.8958);">Pegar</div>
<div class="t" style="left:115.70px;top:101.00px;font-size:11.5px;line-height:11.5px;color:#262626;transform:scaleX(0.9127);">Nueva</div>
<div class="t" style="left:100.00px;top:116.00px;font-size:11.5px;line-height:11.5px;color:#262626;transform:scaleX(0.9576);">diapositiva</div>
<div class="t" style="left:186.70px;top:69.00px;font-size:11.5px;line-height:11.5px;color:#262626;transform:scaleX(0.9022);">Diseño</div>
<div class="t" style="left:186.70px;top:91.00px;font-size:11.5px;line-height:11.5px;color:#262626;transform:scaleX(0.9169);">Restablecer</div>
<div class="t" style="left:186.70px;top:112.00px;font-size:11.5px;line-height:11.5px;color:#262626;transform:scaleX(0.9120);">Sección</div>
<div class="t" style="left:6.00px;top:134.00px;font-size:11.5px;line-height:11.5px;color:#262626;transform:scaleX(0.9100);">Portapapeles</div>
<div class="t" style="left:144.80px;top:134.00px;font-size:11.5px;line-height:11.5px;color:#262626;transform:scaleX(0.9226);">Diapositivas</div>
<div class="t" style="left:370.50px;top:134.00px;font-size:11.5px;line-height:11.5px;color:#262626;transform:scaleX(0.9190);">Fuente</div>
<div class="t" style="left:609.30px;top:134.00px;font-size:11.5px;line-height:11.5px;color:#262626;transform:scaleX(0.9072);">Párrafo</div>
<div class="t" style="left:878.70px;top:101.00px;font-size:11.5px;line-height:11.5px;color:#262626;transform:scaleX(0.9287);">Organizar</div>
<div class="t" style="left:939.40px;top:101.00px;font-size:11.5px;line-height:11.5px;color:#7a7a7a;transform:scaleX(0.8820);">Estilos</div>
<div class="t" style="left:930.50px;top:116.00px;font-size:11.5px;line-height:11.5px;color:#7a7a7a;transform:scaleX(0.9576);">rápidos</div>
<div class="t" style="left:1001.00px;top:69.00px;font-size:11.5px;line-height:11.5px;color:#7a7a7a;transform:scaleX(0.9555);">Relleno de forma</div>
<div class="t" style="left:1001.00px;top:91.00px;font-size:11.5px;line-height:11.5px;color:#7a7a7a;transform:scaleX(0.9906);">Contorno de forma</div>
<div class="t" style="left:1001.00px;top:112.00px;font-size:11.5px;line-height:11.5px;color:#7a7a7a;transform:scaleX(0.9528);">Efectos de forma</div>
<div class="t" style="left:903.60px;top:134.00px;font-size:11.5px;line-height:11.5px;color:#262626;transform:scaleX(0.9785);">Dibujo</div>
<div class="t" style="left:1147.00px;top:69.00px;font-size:11.5px;line-height:11.5px;color:#262626;transform:scaleX(0.9218);">Buscar</div>
<div class="t" style="left:1147.00px;top:91.00px;font-size:11.5px;line-height:11.5px;color:#262626;transform:scaleX(0.9161);">Reemplazar</div>
<div class="t" style="left:1147.00px;top:112.00px;font-size:11.5px;line-height:11.5px;color:#262626;transform:scaleX(0.9285);">Seleccionar</div>
<div class="t" style="left:1158.00px;top:134.00px;font-size:11.5px;line-height:11.5px;color:#262626;transform:scaleX(0.9284);">Edición</div>
<div class="t" style="left:11.70px;top:261.00px;font-size:14px;line-height:14px;color:#f2f2f2;">2</div>
<div class="t" style="left:8.00px;top:667.00px;font-size:11.5px;line-height:11.5px;color:#ececec;transform:scaleX(0.9223);">Diapositiva 2 de 2</div>
<div class="t" style="left:139.80px;top:667.00px;font-size:11.5px;line-height:11.5px;color:#ececec;transform:scaleX(0.9110);">Español (México)</div>
<div class="t" style="left:253.00px;top:667.00px;font-size:11.5px;line-height:11.5px;color:#ececec;transform:scaleX(0.9246);">Accesibilidad: es necesario investigar</div>
<div class="t" style="left:802.70px;top:668.00px;font-size:11.5px;line-height:11.5px;color:#ececec;transform:scaleX(0.9433);">Notas</div>
<div class="t" style="left:866.40px;top:668.00px;font-size:11.5px;line-height:11.5px;color:#ececec;transform:scaleX(0.9233);">Comentarios</div>
<div class="t" style="left:1230.50px;top:668.00px;font-size:11.5px;line-height:11.5px;color:#ececec;transform:scaleX(0.8913);">72%</div>
<div class="t" style="left:368.40px;top:212.00px;font-size:37px;line-height:37px;color:#111;transform:scaleX(0.8316);-webkit-text-stroke:0.6px #fff;">Haga</div>
<div class="t" style="left:454.70px;top:212.00px;font-size:37px;line-height:37px;color:#111;transform:scaleX(0.8951);-webkit-text-stroke:0.6px #fff;">clic</div>
<div class="t" style="left:516.60px;top:212.00px;font-size:37px;line-height:37px;color:#111;transform:scaleX(0.8725);-webkit-text-stroke:0.6px #fff;">para</div>
<div class="t" style="left:596.00px;top:212.00px;font-size:37px;line-height:37px;color:#111;transform:scaleX(0.9039);-webkit-text-stroke:0.6px #fff;">agregar</div>
<div class="t" style="left:725.30px;top:212.00px;font-size:37px;line-height:37px;color:#111;transform:scaleX(0.9938);-webkit-text-stroke:0.6px #fff;">título</div>
<div class="t" style="left:411.60px;top:76.00px;font-size:11.8px;line-height:11.8px;color:#333;transform:scaleX(0.8750);">24+</div>
<div class="t" style="left:382.70px;top:293.00px;font-size:22.7px;line-height:22.7px;color:#111;transform:scaleX(0.9171);-webkit-text-stroke:0;">Haga</div>
<div class="t" style="left:439.50px;top:293.00px;font-size:22.7px;line-height:22.7px;color:#111;transform:scaleX(0.8933);-webkit-text-stroke:0;">clic</div>
<div class="t" style="left:478.80px;top:293.00px;font-size:22.7px;line-height:22.7px;color:#111;transform:scaleX(0.9143);-webkit-text-stroke:0;">para</div>
<div class="t" style="left:528.20px;top:293.00px;font-size:22.7px;line-height:22.7px;color:#111;transform:scaleX(0.9744);-webkit-text-stroke:0;">agregar</div>
<div class="t" style="left:612.60px;top:293.00px;font-size:22.7px;line-height:22.7px;color:#111;transform:scaleX(1.0122);-webkit-text-stroke:0;">texto</div>

</body></html>
